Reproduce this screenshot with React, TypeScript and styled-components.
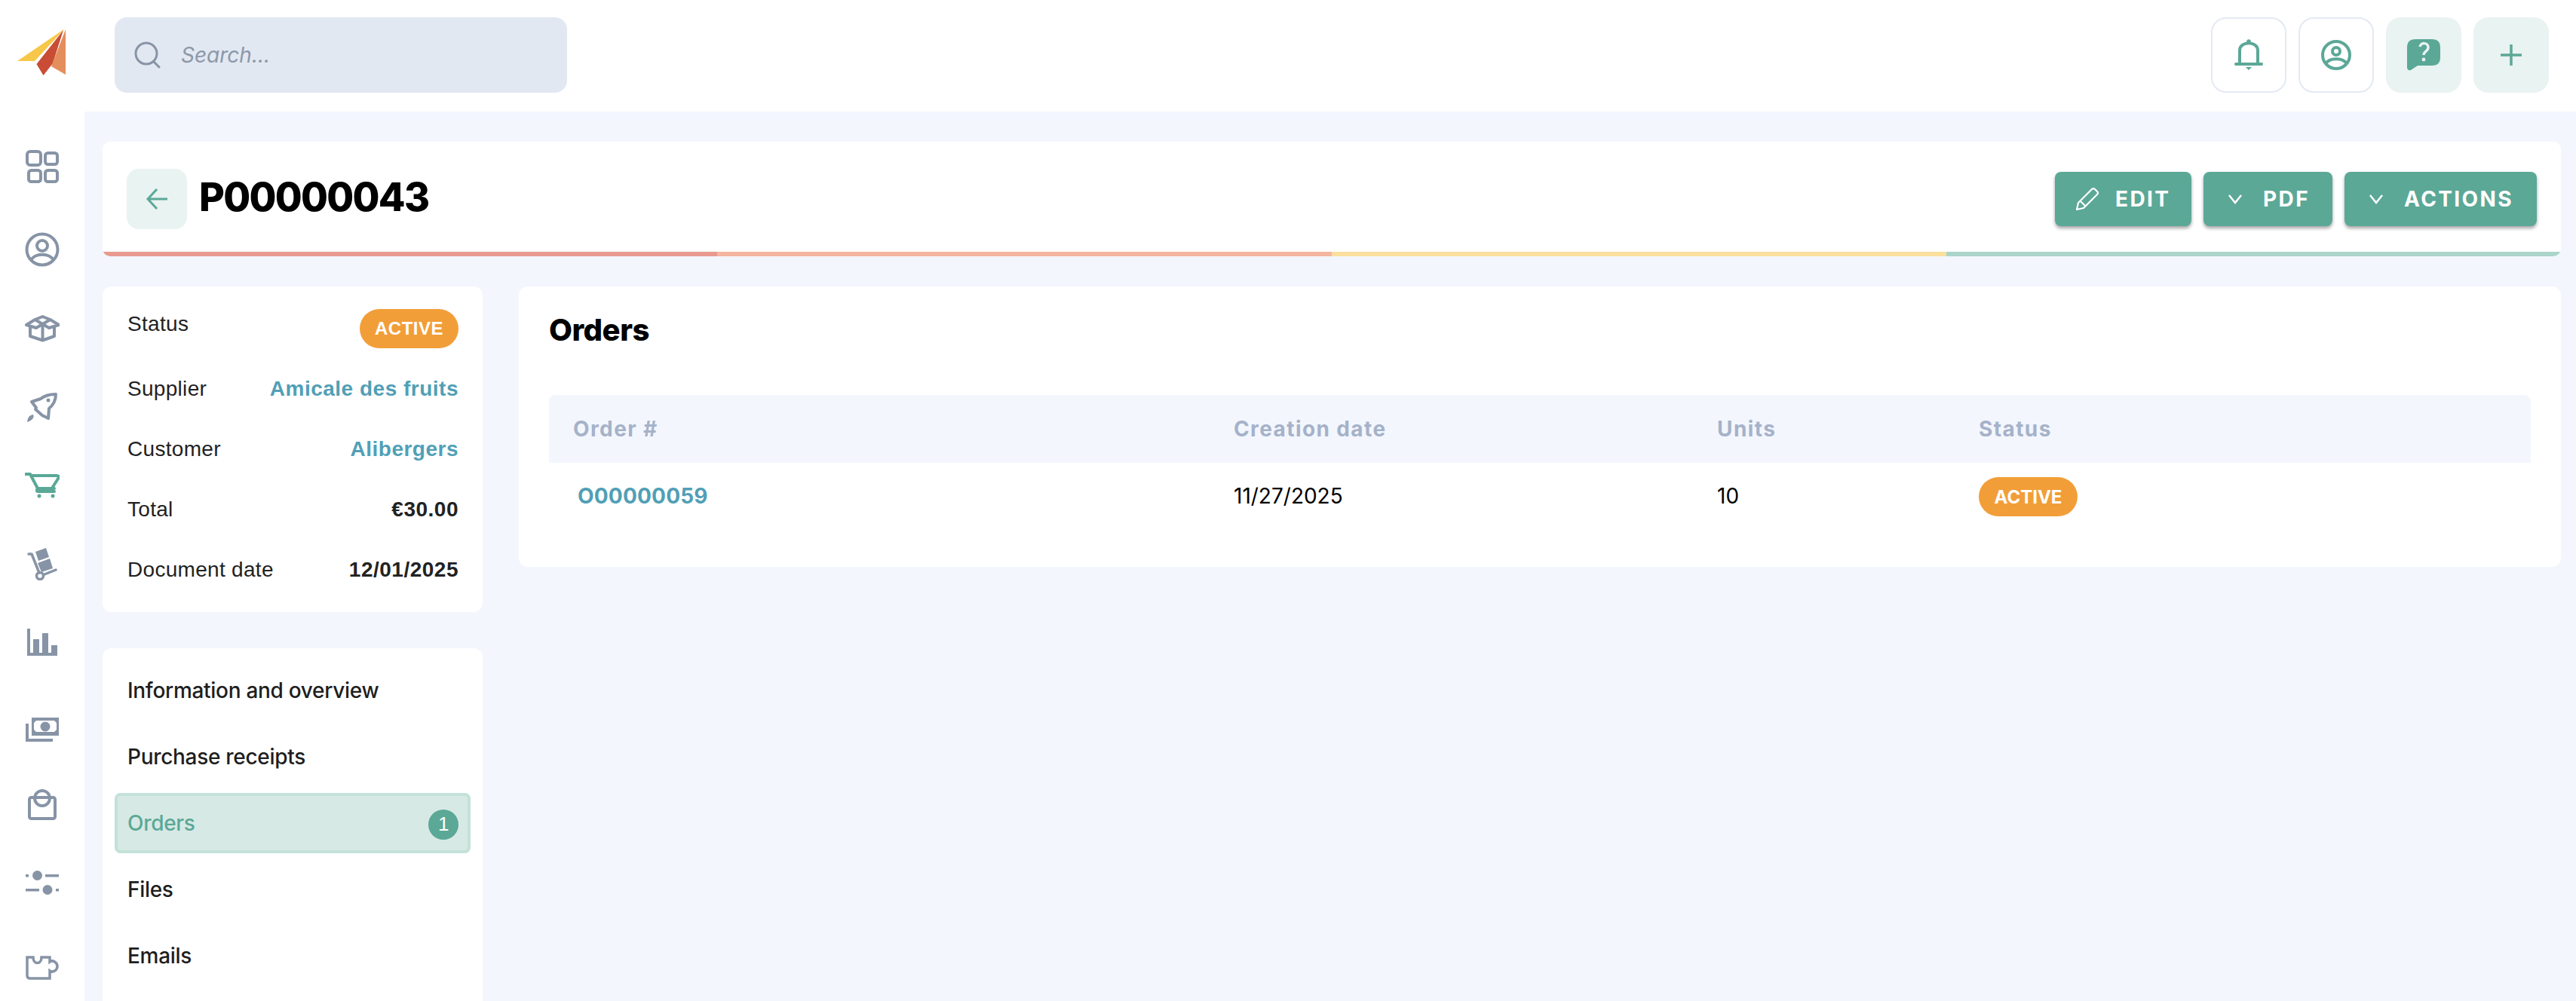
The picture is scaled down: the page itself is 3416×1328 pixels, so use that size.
import React from "react";
import styled, { createGlobalStyle } from "styled-components";

const Global = createGlobalStyle`
  html, body { margin: 0; padding: 0; background: #fff; }
  * { box-sizing: border-box; }
  body { font-family: Inter, "Liberation Sans", sans-serif; overflow: hidden; }
`;

const Page = styled.div`
  width: 3416px; height: 1328px; display: flex; flex-direction: column; overflow: hidden;
`;
const Topbar = styled.header`
  height: 148px; flex: none; display: flex; align-items: center; padding: 0 36px 2px 0; background: #fff;
`;
const LogoSlot = styled.div`
  width: 152px; flex: none; padding: 0 0 6px 22px; display: flex; align-items: center;
`;
const SearchBox = styled.div`
  width: 600px; height: 100px; border-radius: 16px; background: #e2e8f2; display: flex; align-items: center;
  gap: 26px; padding-left: 26px;
`;
const SearchText = styled.span`
  font: italic 400 28px Inter, sans-serif; color: #8c98a9;
`;
const TopActions = styled.div`
  margin-left: auto; display: flex; gap: 16px;
`;
const TopButton = styled.div<{ $filled?: boolean }>`
  width: 100px; height: 100px; border-radius: 20px; display: flex; align-items: center; justify-content: center;
  background: ${(p) => (p.$filled ? "#e9f3f1" : "#fff")};
  border: ${(p) => (p.$filled ? "none" : "2px solid #e4e9f3")};
`;
const Body = styled.div`
  flex: 1; display: flex; min-height: 0;
`;
const Rail = styled.nav`
  width: 112px; flex: none; display: flex; flex-direction: column; align-items: center; padding-top: 51px; background: #fff;
`;
const RailIcon = styled.div<{ $top: number }>`
  margin-top: ${(p) => p.$top}px; display: flex; line-height: 0;
`;
const Main = styled.main`
  flex: 1; background: #f3f6fd; padding: 40px 20px 0 24px; display: flex; flex-direction: column; gap: 40px; min-width: 0;
`;
const HeaderCard = styled.section`
  height: 152px; flex: none; background: #fff; border-radius: 10px; overflow: hidden; display: flex; flex-direction: column;
`;
const HeaderRow = styled.div`
  flex: 1; display: flex; align-items: center; padding: 6px 32px 0;
`;
const BackButton = styled.div`
  width: 80px; height: 80px; border-radius: 16px; background: #e9f3f1; display: flex; align-items: center; justify-content: center;
  margin: 0 16px 0 0;
`;
const Title = styled.h1`
  margin: 0 0 6px; font: 800 52px Inter, sans-serif; color: #000; letter-spacing: -1.7px;
`;
const HeaderActions = styled.div`
  margin-left: auto; display: flex; gap: 16px;
`;
const ActionButton = styled.button<{ $w: number; $pad: number; $gap: number }>`
  width: ${(p) => p.$w}px; height: 72px; border: none; border-radius: 8px; background: #5ba897; color: #fff;
  font: 700 28px Inter, sans-serif; letter-spacing: 2.4px; display: flex; align-items: center; justify-content: flex-start;
  gap: ${(p) => p.$gap}px; padding: 0 0 0 ${(p) => p.$pad}px;
  box-shadow: 0 3px 4px rgba(60, 60, 60, 0.45);
`;
const Progress = styled.div`
  height: 6px; flex: none; display: grid; grid-template-columns: repeat(4, 1fr);
`;
const ProgressPart = styled.div<{ $c: string }>`
  background: ${(p) => p.$c};
`;
const Content = styled.div`
  flex: 1; display: flex; gap: 48px; min-height: 0;
`;
const LeftCol = styled.div`
  width: 504px; flex: none; display: flex; flex-direction: column; gap: 48px;
`;
const InfoCard = styled.section`
  height: 432px; background: #fff; border-radius: 12px; padding: 30px 32px 0 33px; display: flex; flex-direction: column;
`;
const InfoRow = styled.div<{ $h: number; $items?: string; $top?: number }>`
  height: ${(p) => p.$h}px; flex: none; display: flex; justify-content: space-between; align-items: ${(p) => p.$items || "center"};
  margin-top: ${(p) => p.$top || 0}px;
  font: 400 28px "Liberation Sans", sans-serif; color: #222; letter-spacing: 0.3px;
`;
const InfoLabel = styled.span<{ $up?: boolean }>`
  margin-top: ${(p) => (p.$up ? "4px" : "0")};
`;
const InfoValue = styled.span<{ $link?: boolean }>`
  font-weight: 700; color: ${(p) => (p.$link ? "#519fb6" : "#222")}; letter-spacing: 0.5px;
`;
const Pill = styled.span`
  width: 131px; height: 52px; border-radius: 26px; background: #f29e38; color: #fff; display: flex; align-items: center; justify-content: center;
  font: 700 24px "Liberation Sans", sans-serif; letter-spacing: 0.5px;
`;
const TablePill = styled(Pill)`
  font: 700 24px Inter, sans-serif; letter-spacing: 0; margin-top: 2px;
`;
const NavCard = styled.section`
  flex: 1; background: #fff; border-radius: 12px 12px 0 0; padding: 16px 16px 0; display: flex; flex-direction: column;
`;
const NavItem = styled.div<{ $active?: boolean }>`
  height: 80px; margin-bottom: 8px; flex: none; display: flex; align-items: center; justify-content: space-between; padding: 0 16px 0 17px;
  border-radius: 8px;
  font: 500 28px Inter, sans-serif; letter-spacing: -0.3px;
  color: ${(p) => (p.$active ? "#5ba897" : "#1e1e1e")};
  background: ${(p) => (p.$active ? "#d7e9e4" : "transparent")};
  box-shadow: ${(p) => (p.$active ? "inset 0 0 0 4px #c3e2d9" : "none")};
`;
const Count = styled.span`
  width: 40px; height: 40px; border-radius: 50%; background: #5ba897; color: #fff; display: flex; align-items: center; justify-content: center;
  font: 400 26px "Liberation Sans", sans-serif; margin-top: 3px;
`;
const OrdersCard = styled.section`
  flex: 1; height: 372px; background: #fff; border-radius: 12px; padding: 0 40px;
`;
const OrdersTitle = styled.h2`
  margin: 0; height: 144px; padding-top: 33px; font: 800 40px Inter, sans-serif; color: #000; letter-spacing: -0.5px;
`;
const Grid = styled.div`
  display: grid; grid-template-columns: 876px 641px 347px 1fr; align-items: center;
`;
const HeadRow = styled(Grid)`
  height: 90px; background: #f3f6fd; border-radius: 8px 8px 0 0;
`;
const HeadCell = styled.div`
  padding-left: 32px; font: 700 28px Inter, sans-serif; color: #a5b2c9; letter-spacing: 1.4px;
`;
const DataRow = styled(Grid)`
  height: 88px;
`;
const DataCell = styled.div`
  padding-left: 32px; font: 400 28px Inter, sans-serif; color: #000;
`;
const OrderLink = styled.a`
  margin-left: 6px; font: 700 28px Inter, sans-serif; color: #519fb6; letter-spacing: 0.2px;
`;

const G = "#8794a6";
const T = "#5ba897";

const Logo = () => (
  <svg width="66" height="64" viewBox="0 0 66 64">
    <polygon points="64,0 1,43 24,43" fill="#f6c748" />
    <polygon points="62,2 26.5,47 35.5,62 48,46" fill="#c94c35" />
    <polygon points="65,1 65,61 46,50" fill="#e58e5d" />
  </svg>
);

const Chev = () => (
  <svg width="18" height="14" viewBox="0 0 18 14" fill="none" stroke="#fff" strokeWidth="2.5"><path d="M1 2 L9 12 L17 2" /></svg>
);

const rail = [
  { top: 0, el: (
    <svg width="44" height="44" viewBox="0 0 44 44" fill="none" stroke={G} strokeWidth="4">
      <rect x="2" y="2" width="18" height="18" rx="4" /><rect x="26" y="4" width="16" height="15" rx="3.5" />
      <rect x="4" y="27" width="16" height="15" rx="3.5" /><rect x="26" y="27" width="16" height="15" rx="3.5" />
    </svg>) },
  { top: 65, el: (
    <svg width="46" height="46" viewBox="0 0 46 46" fill="none" stroke={G} strokeWidth="4">
      <circle cx="23" cy="23" r="20.5" /><circle cx="23" cy="18" r="7" /><path d="M8 38 C12 27 34 27 38 38" />
    </svg>) },
  { top: 64, el: (
    <svg width="46" height="36" viewBox="0 0 46 36" fill="none" stroke={G} strokeWidth="4" strokeLinejoin="round">
      <path d="M23.5 2 L33.5 6 L23.5 12 L13.5 6 Z" /><path d="M13.5 6 L2 13 L15 17 L23.5 12 L32 17 L45 13 L33.5 6" />
      <path d="M7 16 V28 L23.5 33.5 L39 28 V16" /><path d="M23.5 12 V33" />
    </svg>) },
  { top: 66, el: (
    <svg width="42" height="42" viewBox="0 0 42 42" fill="none" stroke={G} strokeWidth="4" strokeLinejoin="round">
      <path d="M39 3 C30 3 24 5 19 9 L7 13 L13 21 L12 23 L21 31 L29 35 L30 22 C36 17 39 10 39 3 Z" />
      <circle cx="29" cy="11" r="2.5" fill={G} stroke="none" />
      <path d="M1 40 C2 33 4 31 9 30 C11 33 8 38 1 40 Z" fill={G} stroke="none" />
    </svg>) },
  { top: 65, el: (
    <svg width="46" height="34" viewBox="0 0 46 34" fill="none" stroke={T} strokeWidth="4" strokeLinejoin="round" strokeLinecap="round">
      <path d="M1 2 H7 L17 21 H39" />
      <path d="M8 4 H42 Q46 4 44 8 L37 19" /><path d="M17 21 Q14 25 18 25 H39" />
      <circle cx="19" cy="31" r="2.5" fill={T} stroke="none" /><circle cx="37" cy="31" r="2.5" fill={T} stroke="none" />
    </svg>) },
  { top: 65, el: (
    <svg width="40" height="44" viewBox="0 0 40 44" fill={G}>
      <path d="M2 9 H6 L16 34" fill="none" stroke={G} strokeWidth="3.5" strokeLinecap="round" strokeLinejoin="round" />
      <circle cx="17" cy="38" r="4.5" fill="none" stroke={G} strokeWidth="3.5" />
      <path d="M23 36 L38 30" fill="none" stroke={G} strokeWidth="3.5" strokeLinecap="round" />
      <path d="M11 6 L25 1 L29 13 L15 18 Z" /><path d="M14 21 L30 15 L34 28 L19 33 Z" />
    </svg>) },
  { top: 64, el: (
    <svg width="40" height="36" viewBox="0 0 40 36" fill={G}>
      <rect x="0" y="0" width="4" height="36" /><rect x="0" y="32" width="40" height="4" />
      <rect x="8" y="14" width="8" height="20" /><rect x="20" y="6" width="8" height="28" /><rect x="32" y="22" width="8" height="12" />
    </svg>) },
  { top: 82, el: (
    <svg width="44" height="32" viewBox="0 0 44 32" fill={G}>
      <path fillRule="evenodd" d="M8 0 H44 V24 H8 Z M14 4 L11 7 V16 L14 19 H38 L41 16 V7 L38 4 Z" />
      <circle cx="26" cy="12" r="6.5" />
      <path d="M0 8 H4 V28 H36 V32 H0 Z" />
    </svg>) },
  { top: 62, el: (
    <svg width="38" height="42" viewBox="0 0 38 42" fill="none" stroke={G} strokeWidth="4" strokeLinejoin="round">
      <rect x="2" y="12" width="34" height="28" rx="2.5" /><circle cx="19" cy="13" r="10" />
    </svg>) },
  { top: 67, el: (
    <svg width="44" height="32" viewBox="0 0 44 32" fill={G}>
      <circle cx="15.5" cy="6.5" r="6.5" /><circle cx="29" cy="25.5" r="6.5" />
      <rect x="0" y="5" width="4" height="3.5" /><rect x="26" y="5" width="18" height="3.5" />
      <rect x="0" y="24" width="18" height="3.5" /><rect x="40" y="24" width="4" height="3.5" />
    </svg>) },
  { top: 81, el: (
    <svg width="44" height="32" viewBox="0 0 44 32" fill="none" stroke={G} strokeWidth="3.5">
      <path d="M2 2 H10 C10 12 21 12 21 2 H32 V8 C36 5 42 9 42 14 C42 19 36 23 32 20 V30 H6 Q2 30 2 26 Z" />
    </svg>) },
];

export default function App() {
  return (
    <Page>
      <Global />
      <Topbar>
        <LogoSlot><Logo /></LogoSlot>
        <SearchBox>
          <svg width="36" height="36" viewBox="0 0 36 36" fill="none" stroke={G} strokeWidth="3"><circle cx="16" cy="16" r="14" /><path d="M26 27 L33 34" strokeLinecap="round" /></svg>
          <SearchText>Search...</SearchText>
        </SearchBox>
        <TopActions>
          <TopButton>
            <svg width="38" height="42" viewBox="0 0 38 42" fill="none" stroke={T} strokeWidth="4">
              <path d="M7 33 V15 C7 2 31 2 31 15 V33" /><path d="M2 33 H36" strokeWidth="4" strokeLinecap="round" />
              <circle cx="19" cy="3" r="2.8" fill={T} stroke="none" /><path d="M15 37 H23 L19 41 Z" fill={T} stroke="none" />
            </svg>
          </TopButton>
          <TopButton>
            <svg width="40" height="40" viewBox="0 0 40 40" fill="none" stroke={T} strokeWidth="4">
              <circle cx="20" cy="20" r="18" /><circle cx="20" cy="15" r="5" /><path d="M6 32 C10 23 30 23 34 32" />
            </svg>
          </TopButton>
          <TopButton $filled>
            <svg width="44" height="42" viewBox="0 0 44 42">
              <path d="M11 0 H33 Q44 0 44 11 V24 Q44 35 33 35 H14 L5 41 Q1 42 0 38 V11 Q0 0 11 0 Z" fill={T} />
              <path d="M17 10 C18 4 28 4 28 11 C28 16 22 16 22 21" fill="none" stroke="#e9f3f1" strokeWidth="3.5" />
              <circle cx="22" cy="27" r="2.4" fill="#e9f3f1" />
            </svg>
          </TopButton>
          <TopButton $filled>
            <svg width="28" height="28" viewBox="0 0 28 28" stroke={T} strokeWidth="3.5"><path d="M14 0 V28 M0 14 H28" /></svg>
          </TopButton>
        </TopActions>
      </Topbar>
      <Body>
        <Rail>
          {rail.map((r, i) => (<RailIcon key={i} $top={r.top}>{r.el}</RailIcon>))}
        </Rail>
        <Main>
          <HeaderCard>
            <HeaderRow>
              <BackButton>
                <svg width="28" height="28" viewBox="0 0 28 28" fill="none" stroke={T} strokeWidth="3"><path d="M28 14 H2 M14 1 L2 14 L14 27" /></svg>
              </BackButton>
              <Title>P00000043</Title>
              <HeaderActions>
                <ActionButton $w={181} $pad={27} $gap={21}>
                  <svg width="32" height="32" viewBox="0 0 32 32" fill="none" stroke="#fff" strokeWidth="2.2" strokeLinejoin="round">
                    <path d="M2 30 L4 21 L22 3 Q24 1 26 3 L29 6 Q31 8 29 10 L11 28 Z" /><path d="M6 18 L14 26" />
                  </svg>
                  EDIT
                </ActionButton>
                <ActionButton $w={171} $pad={33} $gap={28}><Chev />PDF</ActionButton>
                <ActionButton $w={255} $pad={33} $gap={28}><Chev />ACTIONS</ActionButton>
              </HeaderActions>
            </HeaderRow>
            <Progress>
              <ProgressPart $c="#e99a90" /><ProgressPart $c="#f5b6a0" /><ProgressPart $c="#fadf9e" /><ProgressPart $c="#abd5c9" />
            </Progress>
          </HeaderCard>
          <Content>
            <LeftCol>
              <InfoCard>
                <InfoRow $h={52} $items="flex-start"><InfoLabel $up>Status</InfoLabel><Pill>ACTIVE</Pill></InfoRow>
                <InfoRow $h={80} $top={14}><span>Supplier</span><InfoValue $link>Amicale des fruits</InfoValue></InfoRow>
                <InfoRow $h={80}><span>Customer</span><InfoValue $link>Alibergers</InfoValue></InfoRow>
                <InfoRow $h={80}><span>Total</span><InfoValue>€30.00</InfoValue></InfoRow>
                <InfoRow $h={80}><span>Document date</span><InfoValue>12/01/2025</InfoValue></InfoRow>
              </InfoCard>
              <NavCard>
                <NavItem>Information and overview</NavItem>
                <NavItem>Purchase receipts</NavItem>
                <NavItem $active>Orders<Count>1</Count></NavItem>
                <NavItem>Files</NavItem>
                <NavItem>Emails</NavItem>
              </NavCard>
            </LeftCol>
            <OrdersCard>
              <OrdersTitle>Orders</OrdersTitle>
              <HeadRow>
                <HeadCell>Order #</HeadCell><HeadCell>Creation date</HeadCell><HeadCell>Units</HeadCell><HeadCell>Status</HeadCell>
              </HeadRow>
              <DataRow>
                <DataCell><OrderLink>O00000059</OrderLink></DataCell>
                <DataCell>11/27/2025</DataCell>
                <DataCell>10</DataCell>
                <DataCell><TablePill>ACTIVE</TablePill></DataCell>
              </DataRow>
            </OrdersCard>
          </Content>
        </Main>
      </Body>
    </Page>
  );
}
